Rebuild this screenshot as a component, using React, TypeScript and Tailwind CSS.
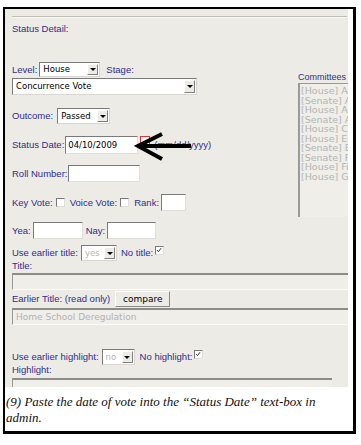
import React from "react";

const label = "text-[9.5px] leading-[10px] text-[#2e2e8f] whitespace-nowrap";
const field = "font-['DejaVu_Sans',sans-serif] text-[8.5px] leading-none";

function Arrow() {
  return (
    <span className="flex w-[11px] h-full items-center justify-center bg-[#ecebe6] border-l border-t border-l-white border-t-white border-r border-b border-r-[#808080] border-b-[#808080]">
      <span className="block w-0 h-0 border-l-[3px] border-r-[3px] border-t-[3px] border-l-transparent border-r-transparent border-t-black" />
    </span>
  );
}

function Select({ value, w, h = "h-[15px]", disabled = false }: { value: string; w: string; h?: string; disabled?: boolean }) {
  return (
    <div className={`flex ${w} ${h} bg-white border border-t-[#7a7a7a] border-l-[#7a7a7a] border-r-[#d8d6cf] border-b-[#d8d6cf] p-[1px]`}>
      <span className={`${field} flex-1 flex items-center pl-[2px] ${disabled ? "text-[#b4b4b4]" : "text-black"}`}>{value}</span>
      <Arrow />
    </div>
  );
}

function Input({ w, h = "h-[17px]", value = "" }: { w: string; h?: string; value?: string }) {
  return (
    <div className={`${w} ${h} bg-white border border-t-[#7a7a7a] border-l-[#7a7a7a] border-r-[#e0ded8] border-b-[#e0ded8] flex items-center pl-[2px] ${field} text-black`}>
      {value}
    </div>
  );
}

function Check({ checked = false }: { checked?: boolean }) {
  return (
    <span className="relative inline-block w-[9px] h-[9px] bg-white border border-t-[#7a7a7a] border-l-[#7a7a7a] border-r-[#e0ded8] border-b-[#e0ded8]">
      {checked && (
        <svg viewBox="0 0 9 9" className="absolute left-0 top-0 w-[7px] h-[7px]">
          <path d="M1.5 4 L3.2 6 L6.5 1.5" stroke="#222" strokeWidth="1.2" fill="none" />
        </svg>
      )}
    </span>
  );
}

function ReadOnly({ w, value = "" }: { w: string; value?: string }) {
  return (
    <div className={`${w} h-[17px] bg-[#efeee9] border-t-2 border-t-[#8c8c88] border-l border-l-[#9a9a96] border-b border-b-[#fbfbf9] flex items-center pl-[3px] ${field} text-[9px] text-[#b2b2b2]`}>
      {value}
    </div>
  );
}

// list box is clipped by the panel edge, as in the original screenshot
const committees = [
  "[House] Ag",
  "[Senate] Ag",
  "[House] Ap",
  "[Senate] Ap",
  "[House] Co",
  "[House] Ed",
  "[Senate] Ed",
  "[Senate] Fi",
  "[House] Fi",
  "[House] Go",
];

export default function App() {
  return (
    <div className="relative w-[361px] h-[445px] bg-white font-['Liberation_Sans',Arial,sans-serif] overflow-hidden">
      <div className="ml-[3px] mt-[7px] w-[353px] h-[427px] border-l-2 border-t-2 border-r-[3px] border-b-[3px] border-black flex flex-col">
        <div className="relative w-[343px] h-[378px] bg-[#ecebe6] overflow-hidden pl-[7px] pt-[7px] flex flex-col">
          <div className="w-[335px] h-[2px] border-t border-t-[#bebdb6] border-b border-b-[#f8f8f6]" />
          <div className={`${label} mt-[6px]`}>Status Detail:</div>

          <div className="flex mt-[28px]">
            <div className="w-[286px] flex flex-col">
              <div className="flex items-center h-[15px]">
                <span className={label}>Level:</span>
                <span className="ml-[2px]"><Select value="House" w="w-[61px]" /></span>
                <span className={`${label} ml-[6px]`}>Stage:</span>
              </div>
              <div className="mt-[1px]">
                <Select value="Concurrence Vote" w="w-[185px]" h="h-[17px]" />
              </div>
              <div className="flex items-center mt-[13px] h-[16px]">
                <span className={label}>Outcome:</span>
                <span className="ml-[4px]"><Select value="Passed" w="w-[53px]" h="h-[16px]" /></span>
              </div>
              <div className="flex items-center mt-[12px] h-[18px]">
                <span className={label}>Status Date:</span>
                <span className="ml-[1px]"><Input w="w-[73px]" h="h-[18px]" value="04/10/2009" /></span>
                <span className="ml-[2px] w-[10px] h-[10px] border border-[#e03030] bg-white self-start" />
                <span className={`${label} ml-[4px] text-[9.5px]`}>(mm/dd/yyyy)</span>
              </div>
              <div className="flex items-center mt-[11px] h-[17px]">
                <span className={label}>Roll Number:</span>
                <span className="ml-[1px]"><Input w="w-[72px]" /></span>
              </div>
              <div className="flex items-center mt-[12px] h-[17px]">
                <span className={label}>Key Vote:</span>
                <span className="ml-[3px] flex"><Check /></span>
                <span className={`${label} ml-[5px]`}>Voice Vote:</span>
                <span className="ml-[3px] flex"><Check /></span>
                <span className={`${label} ml-[5px]`}>Rank:</span>
                <span className="ml-[2px]"><Input w="w-[25px]" /></span>
              </div>
              <div className="flex items-center mt-[11px] h-[17px]">
                <span className={label}>Yea:</span>
                <span className="ml-[2px]"><Input w="w-[50px]" /></span>
                <span className={`${label} ml-[3px]`}>Nay:</span>
                <span className="ml-[2px]"><Input w="w-[49px]" /></span>
              </div>
            </div>
            <div className="flex-1 flex flex-col pt-[10px] overflow-hidden">
              <span className={`${label} text-[9px]`}>Committees</span>
              <div className="mt-[1px] h-[134px] bg-[#efeee9] border-l-2 border-l-[#9a9a96] border-t border-t-[#9a9a96] pl-[1px] pt-[2px] flex flex-col">
                {committees.map((c) => (
                  <span key={c} className={`${field} text-[9.5px] leading-[13px] text-[#b4b4b4] whitespace-nowrap`}>{c}</span>
                ))}
              </div>
            </div>
          </div>

          <div className="flex items-center mt-[6px] h-[16px]">
            <span className={label}>Use earlier title:</span>
            <span className="ml-[3px]"><Select value="yes" w="w-[36px]" h="h-[16px]" disabled /></span>
            <span className={`${label} ml-[4px]`}>No title:</span>
            <span className="ml-[2px] flex self-start mt-[1px]"><Check checked /></span>
          </div>
          <div className={`${label} h-[10px]`}>Title:</div>
          <div className="mt-[2px]"><ReadOnly w="w-[345px]" /></div>
          <div className="flex items-center mt-[1px] h-[16px]">
            <span className={label}>Earlier Title: (read only)</span>
            <span className={`ml-[5px] w-[55px] h-[16px] flex items-center justify-center bg-[#ecebe6] border border-t-white border-l-white border-r-[#8a8a8a] border-b-[#8a8a8a] ${field} text-[9px] text-black`}>compare</span>
          </div>
          <div className="mt-[1px]"><ReadOnly w="w-[345px]" value="Home School Deregulation" /></div>

          <div className="flex items-center mt-[24px] h-[16px]">
            <span className={label}>Use earlier highlight:</span>
            <span className="ml-[3px]"><Select value="no" w="w-[33px]" h="h-[16px]" disabled /></span>
            <span className={`${label} ml-[5px]`}>No highlight:</span>
            <span className="ml-[2px] flex self-start mt-[1px]"><Check checked /></span>
          </div>
          <div className={`${label} h-[10px]`}>Highlight:</div>
          <div className="mt-[3px]"><ReadOnly w="w-[320px]" /></div>
        </div>

        <div className="pl-[1px] pt-[7px] font-['Liberation_Serif','Times_New_Roman',serif] italic text-[13px] leading-[16px] text-[#111]">
          <p>(9) Paste the date of vote into the “Status Date” text-box in</p>
          <p>admin.</p>
        </div>
      </div>

      <svg className="absolute left-[134px] top-[130px]" width="60" height="32" viewBox="0 0 60 32">
        <path d="M5 16 H57" stroke="black" strokeWidth="4" />
        <path d="M28 4 L4 16 L28 29" stroke="black" strokeWidth="4" fill="none" strokeLinejoin="miter" />
      </svg>
    </div>
  );
}
